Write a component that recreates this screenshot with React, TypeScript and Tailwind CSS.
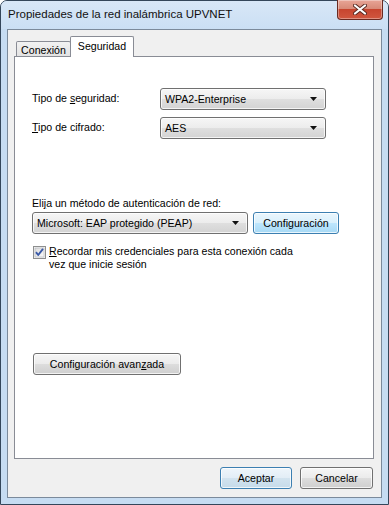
import type { ReactNode } from 'react';

const face = "font-['Liberation_Sans',Arial,sans-serif]";

// combo de solo lectura al estilo Windows 7
function Combo({ value, className = '' }: { value: string; className?: string }) {
  return (
    <div
      className={`h-[22px] flex items-center justify-between pl-[4px] pr-[8px] rounded-[3px] border border-[#707070] bg-[linear-gradient(to_bottom,#f6f6f6_0%,#ececec_50%,#dfdfdf_50%,#d3d3d3_100%)] shadow-[inset_0_0_0_1px_rgba(255,255,255,0.75)] ${className}`}
    >
      <span className="leading-none">{value}</span>
      <svg width="7" height="4" viewBox="0 0 7 4">
        <path d="M0 0h7L3.5 4z" fill="#111" />
      </svg>
    </div>
  );
}

function Button({
  children,
  variant = 'normal',
  className = '',
}: {
  children: ReactNode;
  variant?: 'normal' | 'hover' | 'default';
  className?: string;
}) {
  const styles = {
    normal:
      'border-[#707070] bg-[linear-gradient(to_bottom,#f6f6f6_0%,#ebebeb_50%,#dddddd_50%,#cfcfcf_100%)]',
    hover:
      'border-[#3c7fb1] bg-[linear-gradient(to_bottom,#eaf6fd_0%,#d9f0fc_50%,#bee6fd_50%,#a7d9f5_100%)]',
    default:
      'border-[#3c7fb1] bg-[linear-gradient(to_bottom,#eef5fb_0%,#e2edf6_50%,#d2e3ef_50%,#c6dbea_100%)] shadow-[inset_0_0_0_1px_#9fdcf8]',
  };
  return (
    <div
      className={`h-[22px] flex items-center justify-center rounded-[3px] border shadow-[inset_0_0_0_1px_rgba(255,255,255,0.75)] ${styles[variant]} ${className}`}
    >
      <span className="leading-none">{children}</span>
    </div>
  );
}

function Checkbox() {
  return (
    <svg width="13" height="13" viewBox="0 0 13 13" className="shrink-0">
      <defs>
        <linearGradient id="cb" x1="0" y1="0" x2="1" y2="1">
          <stop offset="0" stopColor="#dcdcdc" />
          <stop offset="1" stopColor="#fbfbfb" />
        </linearGradient>
      </defs>
      <rect x="0.5" y="0.5" width="12" height="12" fill="#f4f4f4" stroke="#8e8f8f" />
      <rect x="2" y="2" width="9" height="9" fill="url(#cb)" stroke="#aeb3b9" strokeWidth="0.6" />
      <path d="M3 6.2 L5.2 9 L10 2.8" fill="none" stroke="#3a5aa8" strokeWidth="1.9" strokeLinejoin="round" />
    </svg>
  );
}

export default function App() {
  return (
    <div
      className={`w-[389px] h-[505px] flex flex-col bg-[#c6dcf2] border border-[#34465a] rounded-t-[7px] text-black ${face} text-[10.6px]`}
    >
      {/* barra de título */}
      <div className="h-[29px] flex bg-[linear-gradient(to_bottom,#d8e7f7_0%,#cadff4_100%)] rounded-t-[6px]">
        <span className="self-center pl-[7px] text-[11.5px] text-[#111]">
          Propiedades de la red inalámbrica UPVNET
        </span>
        <div className="ml-auto mr-[5px] -mt-px w-[46px] h-[20px] flex items-center justify-center rounded-b-[4px] border border-[#6a2a21] border-t-0 bg-[linear-gradient(to_bottom,#e8a597_0%,#d88a78_45%,#c7452f_50%,#d0573f_100%)] shadow-[inset_0_0_0_1px_rgba(255,255,255,0.35)]">
          <svg width="14" height="11" viewBox="0 0 14 11">
            <path d="M2 1.5 L12 9.5 M12 1.5 L2 9.5" stroke="#5a2a22" strokeWidth="4" strokeLinecap="round" />
            <path d="M2 1.5 L12 9.5 M12 1.5 L2 9.5" stroke="#ffffff" strokeWidth="2.2" strokeLinecap="round" />
          </svg>
        </div>
      </div>

      {/* área cliente */}
      <div className="flex-1 mx-[6px] mb-[6px] flex flex-col bg-[#f0f0f0] border border-[#7b8a9b]">
        <div className="pt-[6px] pl-[6px] pr-[7px] flex-1 flex flex-col">
          {/* pestañas */}
          <div className="flex items-end h-[20px] pl-[2px]">
            <div className="h-[15px] w-[55px] flex items-center justify-center border border-b-0 border-[#898c95] bg-[linear-gradient(to_bottom,#f2f2f2,#e3e3e3)] rounded-t-[2px]">
              <span className="leading-none pt-[2px]">Conexión</span>
            </div>
            <div className="relative z-10 -ml-px -mb-px h-[21px] w-[64px] flex items-start justify-center pt-[4px] border border-b-0 border-[#898c95] bg-white rounded-t-[2px]">
              <span className="leading-none">Seguridad</span>
            </div>
          </div>

          {/* panel */}
          <div className="h-[403px] border border-[#898c95] bg-white pl-[17px] pt-[31px]">
            <div className="grid grid-cols-[128px_166px] items-center">
              <span>
                Tipo de <u>s</u>eguridad:
              </span>
              <Combo value="WPA2-Enterprise" />
            </div>
            <div className="grid grid-cols-[128px_166px] items-center mt-[7px]">
              <span>
                <u>T</u>ipo de cifrado:
              </span>
              <Combo value="AES" />
            </div>

            <div className="mt-[58px] h-[14px] flex items-center">
              Eli<u>j</u>a un método de autenticación de red:
            </div>
            <div className="mt-[1px] flex gap-[5px]">
              <Combo value="Microsoft: EAP protegido (PEAP)" className="w-[216px]" />
              <Button variant="hover" className="w-[86px]">
                Confi<u>g</u>uración
              </Button>
            </div>

            <div className="mt-[10px] flex gap-[3px] pl-px">
              <div className="pt-[2px]">
                <Checkbox />
              </div>
              <div className="leading-[13px] pt-px">
                <u>R</u>ecordar mis credenciales para esta conexión cada
                <br />
                vez que inicie sesión
              </div>
            </div>

            <Button className="mt-[82px] ml-px w-[148px]">
              Configuración avan<u>z</u>ada
            </Button>
          </div>

          {/* botones inferiores */}
          <div className="mt-[8px] mb-[8px] flex justify-end gap-[8px] pr-px">
            <Button variant="default" className="w-[72px]">
              Aceptar
            </Button>
            <Button className="w-[73px]">Cancelar</Button>
          </div>
        </div>
      </div>
    </div>
  );
}
